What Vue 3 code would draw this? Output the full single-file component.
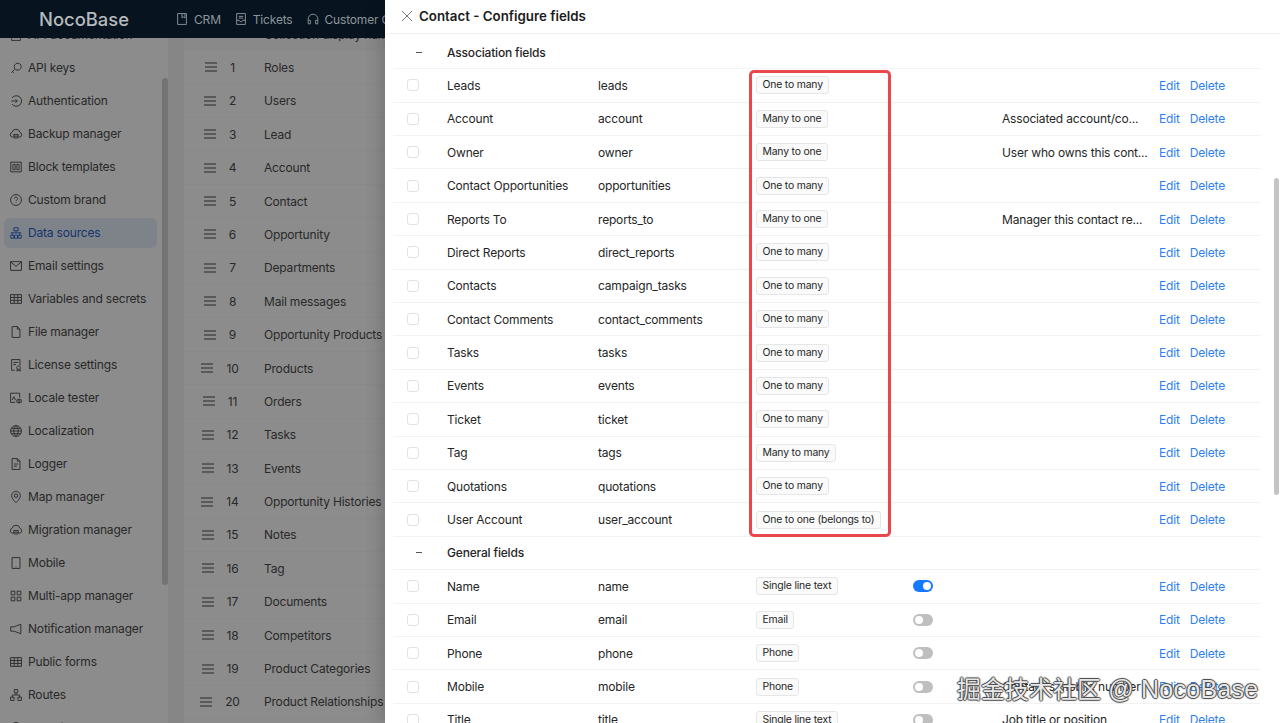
<script setup>
const p = {
  key: 'M6.5 9.5 2.5 13.5M4 12l1.5 1.5M10 2.5a4 4 0 1 1-3.5 6 4 4 0 0 1 3.5-6Z',
  login: 'M2.5 8h7M7.5 6l2 2-2 2M3.5 4.5a6 6 0 1 1 0 7',
  cloud: 'M4.5 11.5H3.8a2.7 2.7 0 0 1-.3-5.3 4.6 4.6 0 0 1 9 0 2.7 2.7 0 0 1-.3 5.3h-.7M5.5 8.5h5v4h-5ZM5.5 10.5h5',
  layout: 'M2 2.5h12v11H2ZM4.5 5h2.5v6H4.5ZM9 5h2.5v6H9Z',
  help: 'M8 1.8a6.2 6.2 0 1 0 0 12.4A6.2 6.2 0 0 0 8 1.8ZM6.2 6.4a1.8 1.8 0 1 1 2.7 1.6c-.6.4-.9.7-.9 1.4M8 11v.6',
  db: 'M5.5 2h5v3.5h-5ZM2 10.5h3.5V14H2ZM10.5 10.5H14V14h-3.5ZM2 7.8h12M8 5.5v2.3M3.7 7.8v2.7M12.3 7.8v2.7M6.3 10.5h3.4V14H6.3Z',
  mail: 'M1.8 3h12.4v10H1.8ZM2 3.5l6 5 6-5',
  table: 'M1.8 3h12.4v10H1.8ZM1.8 6.3h12.4M1.8 9.6h12.4M5.9 3v10M10.1 3v10',
  file: 'M3.5 1.8h6l3 3v9.4h-9ZM9.5 1.8v3h3',
  license: 'M3 1.8h9.5v7M6.5 14H3V1.8M5 5h5.5M5 7.5h3M11 9a2 2 0 1 1-.1 0M9.5 12.5 9 15l2-1 2 1-.5-2.5',
  locale: 'M1.8 2.5h10.4v5M7 13H1.8V2.5M3.5 10.5l2-4 2 4M11.5 8.5v6M9 10h5v3H9Z',
  globe: 'M8 1.8a6.2 6.2 0 1 0 0 12.4A6.2 6.2 0 0 0 8 1.8ZM1.8 8h12.4M2.6 5h10.8M2.6 11h10.8M8 1.8c-3.4 3.6-3.4 8.8 0 12.4M8 1.8c3.4 3.6 3.4 8.8 0 12.4',
  log: 'M3.5 1.8h6l3 3v9.4h-9ZM9.5 1.8v3h3M5.5 8h5M5.5 10.5h3.5',
  pin: 'M8 1.5a5 5 0 0 1 5 5c0 3.5-5 8-5 8s-5-4.5-5-8a5 5 0 0 1 5-5ZM8 4.5a2 2 0 1 0 0 4 2 2 0 0 0 0-4Z',
  phone: 'M3.5 1.8h9v12.4h-9ZM7.5 12.5h1',
  apps: 'M2.5 2.5h4.2v4.2H2.5ZM9.3 2.5h4.2v4.2H9.3ZM2.5 9.3h4.2v4.2H2.5ZM9.3 9.3h4.2v4.2H9.3Z',
  sound: 'M13.5 2.5v11L6 10.5H2V5.5h4Z',
  tree: 'M6 1.8h4v3.7H6ZM1.8 10.5h4v3.7h-4ZM10.2 10.5h4v3.7h-4ZM8 5.5V8M3.8 10.5V8h8.4v2.5',
  shield: 'M8 1.5l5.5 2v5c0 3-2.5 5-5.5 6-3-1-5.5-3-5.5-6v-5Z',
  book: 'M3 1.8h10v12.4H3ZM8 1.8v5l1.7-1.2 1.7 1.2v-5',
  ticket: 'M3 1.8h10v12.4H3ZM3 9.5h3l1 1.5h2l1-1.5h3M5.5 5h5M5.5 7h5',
  head: 'M2.5 9.5V8a5.5 5.5 0 0 1 11 0v1.5M2.5 9.5h2.5v4H2.5ZM11 9.5h2.5v4H11Z',
}
const menu = [
  ['API documentation', 'book'], ['API keys', 'key'], ['Authentication', 'login'], ['Backup manager', 'cloud'],
  ['Block templates', 'layout'], ['Custom brand', 'help'], ['Data sources', 'db', true], ['Email settings', 'mail'],
  ['Variables and secrets', 'table'], ['File manager', 'file'], ['License settings', 'license'], ['Locale tester', 'locale'],
  ['Localization', 'globe'], ['Logger', 'log'], ['Map manager', 'pin'], ['Migration manager', 'cloud'], ['Mobile', 'phone'],
  ['Multi-app manager', 'apps'], ['Notification manager', 'sound'], ['Public forms', 'table'], ['Routes', 'tree'], ['Security', 'shield'],
]
const nav = [['CRM', 'book'], ['Tickets', 'ticket'], ['Customer Operations', 'head']]
const collections = ['Roles', 'Users', 'Lead', 'Account', 'Contact', 'Opportunity', 'Departments', 'Mail messages', 'Opportunity Products', 'Products', 'Orders', 'Tasks', 'Events', 'Opportunity Histories', 'Notes', 'Tag', 'Documents', 'Competitors', 'Product Categories', 'Product Relationships']
const m = 'Many to one', o = 'One to many'
const assoc = [
  ['Leads', 'leads', o], ['Account', 'account', m, 'Associated account/co...'], ['Owner', 'owner', m, 'User who owns this cont...'],
  ['Contact Opportunities', 'opportunities', o], ['Reports To', 'reports_to', m, 'Manager this contact re...'], ['Direct Reports', 'direct_reports', o],
  ['Contacts', 'campaign_tasks', o], ['Contact Comments', 'contact_comments', o], ['Tasks', 'tasks', o], ['Events', 'events', o], ['Ticket', 'ticket', o],
  ['Tag', 'tags', 'Many to many'], ['Quotations', 'quotations', o], ['User Account', 'user_account', 'One to one (belongs to)'],
]
const general = [
  ['Name', 'name', 'Single line text', '', true], ['Email', 'email', 'Email', '', false], ['Phone', 'phone', 'Phone', '', false],
  ['Mobile', 'mobile', 'Phone', "Contact's mobile number", false], ['Title', 'title', 'Single line text', 'Job title or position', false],
]
const groups = [['Association fields', assoc], ['General fields', general]]
</script>

<template>
  <div class="page">
    <header class="topbar">
      <div class="logo">NocoBase</div>
      <nav class="nav">
        <span v-for="n in nav" :key="n[0]" class="nav-item">
          <svg class="ico" viewBox="0 0 16 16"><path :d="p[n[1]]" /></svg>{{ n[0] }}
        </span>
      </nav>
    </header>

    <div class="body">
      <aside class="side">
        <div class="side-list">
          <div v-for="i in menu" :key="i[0]" class="side-item" :class="{ active: i[2] }">
            <svg class="ico" viewBox="0 0 16 16"><path :d="p[i[1]]" /></svg>{{ i[0] }}
          </div>
        </div>
        <div class="side-thumb"></div>
      </aside>
      <main class="main">
        <div class="list">
          <div class="list-row list-head"><span></span><span>Collection display name</span></div>
          <div v-for="(c, idx) in collections" :key="c" class="list-row">
            <span class="sort">
              <svg class="handle" viewBox="0 0 12 10"><path d="M0 1h12M0 5h12M0 9h12" /></svg>
              <b>{{ idx + 1 }}</b>
            </span>
            <span>{{ c }}</span>
          </div>
        </div>
      </main>
    </div>

    <div class="mask"></div>

    <section class="drawer">
      <div class="drawer-title">
        <svg class="close" viewBox="0 0 12 12"><path d="M1 1l10 10M11 1 1 11" /></svg>
        <span>Contact - Configure fields</span>
      </div>
      <div class="fields">
        <template v-for="g in groups" :key="g[0]">
          <div class="row group"><span class="dash"></span><span class="gname">{{ g[0] }}</span></div>
          <div v-for="r in g[1]" :key="r[1]" class="row">
            <span class="check"><i></i></span>
            <span>{{ r[0] }}</span>
            <span>{{ r[1] }}</span>
            <span class="tagcell"><em class="tag">{{ r[2] }}</em></span>
            <span>
              <i v-if="r[4] !== undefined" class="switch" :class="{ on: r[4] }"></i>
            </span>
            <span class="desc">{{ r[3] }}</span>
            <span class="actions"><a>Edit</a><a>Delete</a></span>
          </div>
        </template>
      </div>
      <div class="highlight"></div>
      <div class="thumb"></div>
    </section>

    <div class="watermark">掘金技术社区<span class="wm-latin"> @ NocoBase</span></div>
  </div>
</template>

<style scoped>
.page {
  position: relative;
  width: 1280px;
  height: 723px;
  overflow: hidden;
  display: flex;
  flex-direction: column;
  background: #f5f5f5;
  font-family: Inter, "Liberation Sans", sans-serif;
  font-size: 12px;
  letter-spacing: -0.18px;
  color: #4c4c4c;
}
.ico {
  width: 14px;
  height: 14px;
  flex: none;
  fill: none;
  stroke: currentColor;
  stroke-width: 1.05;
}
.topbar {
  position: relative;
  z-index: 3;
  height: 38px;
  flex: none;
  display: flex;
  align-items: center;
  background: #07141f;
  color: #8b959c;
}
.logo {
  width: 175px;
  padding-left: 39px;
  box-sizing: border-box;
  font-size: 18.4px;
  font-weight: 500;
  letter-spacing: 0;
  color: #b4babd;
}
.nav {
  display: flex;
  gap: 13px;
  white-space: nowrap;
}
.nav-item {
  display: flex;
  align-items: center;
  gap: 5px;
}
.body {
  flex: 1;
  display: flex;
  min-height: 0;
}
.side {
  position: relative;
  width: 168px;
  flex: none;
  overflow: hidden;
  background: #fff;
}
.side-list {
  margin-top: -20px;
  padding: 0 5px 0 4px;
}
.side-item {
  height: 33px;
  display: flex;
  align-items: center;
  gap: 5px;
  width: 153px;
  padding-left: 5px;
  box-sizing: border-box;
  border-radius: 6px;
  white-space: nowrap;
}
.side-item.active {
  height: 30px;
  margin: 1.5px 0;
  background: #e6eefb;
  color: #2c62c6;
}
.side-thumb {
  position: absolute;
  left: 162px;
  top: 40px;
  width: 6px;
  height: 507px;
  border-radius: 3px;
  background: #d3d3d3;
}
.main {
  flex: 1;
  overflow: hidden;
  padding-left: 16px;
}
.list {
  margin-top: -19px;
  background: #fff;
  height: 800px;
}
.list-row {
  height: 33.4px;
  display: flex;
  align-items: center;
  border-bottom: 1px solid #f9f9f9;
  box-sizing: border-box;
  white-space: nowrap;
}
.list-head {
  height: 32.3px;
  background: #fafafa;
}
.list-row > :first-child {
  width: 80px;
  flex: none;
}
.sort {
  display: flex;
  justify-content: center;
  align-items: center;
  gap: 13px;
  padding-right: 8px;
  box-sizing: border-box;
}
.sort b {
  font-weight: 400;
}
.handle {
  width: 12px;
  height: 10px;
  fill: none;
  stroke: #4c4c4c;
  stroke-width: 1.2;
}
.mask {
  position: absolute;
  inset: 0;
  z-index: 2;
  background: rgba(0, 0, 0, 0.45);
}
.drawer {
  position: absolute;
  z-index: 4;
  left: 385px;
  top: 0;
  right: 0;
  bottom: 0;
  overflow: hidden;
  background: #fff;
  box-shadow: -6px 0 14px rgba(0, 0, 0, 0.14);
  color: #262626;
}
.drawer-title {
  height: 34px;
  box-sizing: border-box;
  padding: 0 0 2px 16px;
  border-bottom: 1px solid #f0f0f0;
  display: flex;
  align-items: center;
  gap: 6px;
  font-size: 13.3px;
  font-weight: 600;
  letter-spacing: 0;
  color: #1c1c1c;
}
.close {
  width: 12px;
  height: 12px;
  fill: none;
  stroke: #7a7a7a;
  stroke-width: 1;
}
.fields {
  padding: 1.9px 20px 0 8px;
}
.row {
  height: 33.4px;
  box-sizing: border-box;
  border-bottom: 1px solid #f2f2f2;
  display: grid;
  grid-template-columns: 54px 151px 158px 157px 89px 157px 1fr;
  align-items: center;
  white-space: nowrap;
}
.row > span {
  display: flex;
  align-items: center;
}
.group {
  grid-template-columns: 54px 1fr;
}
.dash {
  width: 6px;
  height: 1px;
  margin-left: 23px;
  background: #555;
}
.gname {
  font-weight: 500;
}
.check i {
  width: 12px;
  height: 12px;
  margin-left: 14px;
  box-sizing: border-box;
  border: 1px solid #e2e2e2;
  border-radius: 3px;
}
.tag {
  font-style: normal;
  font-size: 10.4px;
  line-height: 16px;
  padding: 0 5.5px;
  border: 1px solid #e6e6e6;
  border-radius: 3px;
  background: #fafafa;
}
.switch {
  position: relative;
  width: 20px;
  height: 12px;
  border-radius: 6px;
  background: #bfbfbf;
}
.switch::after {
  content: "";
  position: absolute;
  left: 2px;
  top: 2px;
  width: 8px;
  height: 8px;
  border-radius: 50%;
  background: #fff;
}
.switch.on {
  background: #1677ff;
}
.switch.on::after {
  left: 10px;
}
.actions {
  gap: 10px;
  color: #2f80ed;
}
.highlight {
  position: absolute;
  left: 364px;
  top: 70px;
  width: 142px;
  height: 467px;
  box-sizing: border-box;
  border: 3px solid #e8474c;
  border-radius: 5px;
}
.thumb {
  position: absolute;
  right: 1px;
  top: 178px;
  width: 5px;
  height: 317px;
  border-radius: 3px;
  background: #c4c4c4;
}
.watermark {
  position: absolute;
  z-index: 5;
  left: 957px;
  top: 673px;
  font-family: "Liberation Sans", "Noto Sans CJK SC", sans-serif;
  font-size: 24px;
  letter-spacing: 0;
  line-height: 32px;
  white-space: nowrap;
  color: rgba(255, 255, 255, 0.9);
  text-shadow: 1px 0 1px #444, -1px 0 1px #444, 0 1px 1px #444, 0 -1px 1px #444;
}
.wm-latin {
  font-size: 25px;
  letter-spacing: 0.25px;
}
</style>

<style>
html, body { margin: 0; overflow: hidden; }
</style>
